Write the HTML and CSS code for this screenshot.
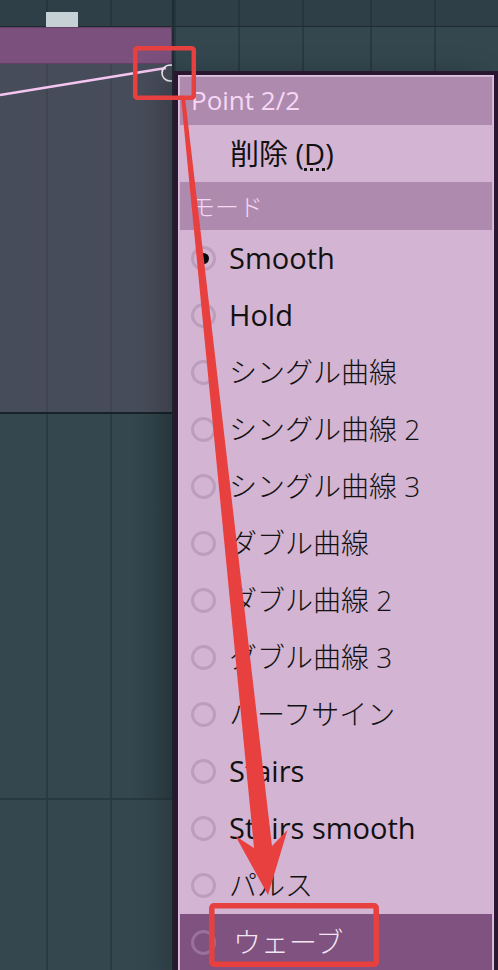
FILE: index.html
```html
<!DOCTYPE html>
<html lang="ja">
<head>
<meta charset="utf-8">
<title>Automation point menu</title>
<link rel="stylesheet" href="styles.css">
</head>
<body>
<div class="stage">
  <div class="tracks">
    <div class="left">
      <div class="ruler"><span class="marker"></span></div>
      <div class="env">
        <div class="clip"></div>
        <svg class="curve" width="172" height="348" viewBox="0 0 172 348">
          <line x1="0" y1="31" x2="166" y2="4" stroke="#f5c6f1" stroke-width="2.6"/>
          <circle cx="170" cy="9" r="8" fill="none" stroke="#f4eef4" stroke-width="1.6"/>
        </svg>
      </div>
      <div class="lower">
        <div class="lower-top"></div>
      </div>
    </div>
    <div class="right">
      <div class="ruler ruler-right"></div>
    </div>
  </div>

  <div class="menu">
    <div class="menu-inner">
      <div class="head">Point 2/2</div>
      <div class="item item-plain"><span>削除 (<u class="acc">D</u>)</span></div>
      <div class="head head-jp">モード</div>
      <div class="item"><span class="radio on"></span><span>Smooth</span></div>
      <div class="item"><span class="radio"></span><span>Hold</span></div>
      <div class="item"><span class="radio"></span><span class="jp">シングル曲線</span></div>
      <div class="item"><span class="radio"></span><span class="jp">シングル曲線 2</span></div>
      <div class="item"><span class="radio"></span><span class="jp">シングル曲線 3</span></div>
      <div class="item"><span class="radio"></span><span class="jp">ダブル曲線</span></div>
      <div class="item"><span class="radio"></span><span class="jp">ダブル曲線 2</span></div>
      <div class="item"><span class="radio"></span><span class="jp">ダブル曲線 3</span></div>
      <div class="item"><span class="radio"></span><span class="jp">ハーフサイン</span></div>
      <div class="item"><span class="radio"></span><span>Stairs</span></div>
      <div class="item"><span class="radio"></span><span>Stairs smooth</span></div>
      <div class="item"><span class="radio"></span><span class="jp">パルス</span></div>
      <div class="item item-hi"><span class="radio"></span><span class="jp wave">ウェーブ</span></div>
    </div>
  </div>

  <svg class="annot" width="498" height="970" viewBox="0 0 498 970">
    <rect x="135.2" y="48.2" width="58.6" height="49.6" rx="2" fill="none" stroke="#e8403f" stroke-width="4.5"/>
    <polygon points="181,97 254,848 235.5,836 268,895 287.5,830 272,846 185,97" fill="#e8403f"/>
    <rect x="211.8" y="905.8" width="164.4" height="58.4" rx="2" fill="none" stroke="#e8403f" stroke-width="5.5"/>
  </svg>
</div>
</body>
</html>
```

FILE: styles.css
```css
html, body {
  margin: 0;
  padding: 0;
  background: #34474f;
}

.stage {
  position: relative;
  width: 498px;
  height: 970px;
  overflow: hidden;
  font-family: "Open Sans", "Noto Sans CJK JP", sans-serif;
}

.tracks {
  display: flex;
  height: 100%;
}

.left {
  width: 172px;
  border-right: 2px solid #1f2c33;
  display: flex;
  flex-direction: column;
  background: #34474f repeating-linear-gradient(to right, transparent 0 46px, #2a3a42 46px 48px, transparent 48px 64px);
}

.right {
  flex: 1;
  background: #34474f repeating-linear-gradient(to right, transparent 0 46px, #2a3a42 46px 48px, transparent 48px 64px);
  background-position: -174px 0;
}

.ruler {
  height: 27px;
  box-sizing: border-box;
  padding: 12px 0 0 46px;
  background: #2e3f47 repeating-linear-gradient(to right, transparent 0 46px, #27363d 46px 48px, transparent 48px 64px);
  border-bottom: 1px solid #1e2b31;
  flex: none;
}

.ruler-right {
  background-position: -174px 0;
  padding: 0;
}

.marker {
  display: block;
  width: 32px;
  height: 15px;
  background: #c6d1d6;
}

.env {
  height: 387px;
  flex: none;
  box-sizing: border-box;
  background: #474c5a repeating-linear-gradient(to right, transparent 0 46px, #41454f 46px 48px, transparent 48px 64px);
  border-bottom: 2px solid #172229;
  display: flex;
  flex-direction: column;
}

.clip {
  height: 37px;
  flex: none;
  box-sizing: border-box;
  background: #7b507c;
  border: 1px solid #623f63;
  border-left: none;
  border-radius: 0 3px 3px 0;
}

.curve {
  display: block;
  flex: none;
}

.lower {
  flex: 1;
}

.lower-top {
  height: 384px;
  border-bottom: 2px solid #293940;
  background: linear-gradient(to right, transparent 130px, rgba(20, 30, 36, 0.18) 172px);
}

.menu {
  position: absolute;
  left: 174px;
  top: 71px;
  width: 324px;
  height: 910px;
  box-sizing: border-box;
  border: 4px solid #2b1631;
  background: #dcc2dc;
  padding: 1px;
  box-shadow: -14px 0 24px rgba(0, 0, 0, 0.18);
}

.menu-inner {
  background: #d3b4d3;
  padding: 1px 1px 0;
  height: 100%;
  box-sizing: border-box;
}

.head {
  height: 48px;
  box-sizing: border-box;
  padding-bottom: 2px;
  background: #ae8aae;
  color: #f6d8f6;
  font-size: 26px;
  display: flex;
  align-items: center;
  padding-left: 11px;
}

.head-jp {
  font-family: "Noto Sans CJK JP", sans-serif;
  font-weight: 300;
  font-size: 24px;
}

.item {
  height: 57px;
  box-sizing: border-box;
  padding-bottom: 3px;
  display: flex;
  align-items: center;
  padding-left: 11px;
  gap: 13px;
  color: #111;
  font-size: 29px;
}

.item .radio {
  margin-top: 3px;
}

.item-plain {
  padding-left: 50px;
}

.jp {
  font-family: "Open Sans", "Noto Sans CJK JP", sans-serif;
  font-weight: 300;
  font-size: 28px;
}

.acc {
  text-decoration: underline dotted;
  text-underline-offset: 3px;
}

.radio {
  width: 25px;
  height: 25px;
  box-sizing: border-box;
  border-radius: 50%;
  border: 3px solid #bc9ebc;
  flex: none;
  display: flex;
  align-items: center;
  justify-content: center;
}

.radio.on::after {
  content: "";
  width: 11px;
  height: 11px;
  border-radius: 50%;
  background: #080808;
}

.item-hi {
  background: #7f5280;
  color: #f3e6f3;
}

.item-hi .radio {
  border-color: #9a719b;
}

.wave {
  margin-left: 4px;
}

.annot {
  position: absolute;
  left: 0;
  top: 0;
  pointer-events: none;
}
```
